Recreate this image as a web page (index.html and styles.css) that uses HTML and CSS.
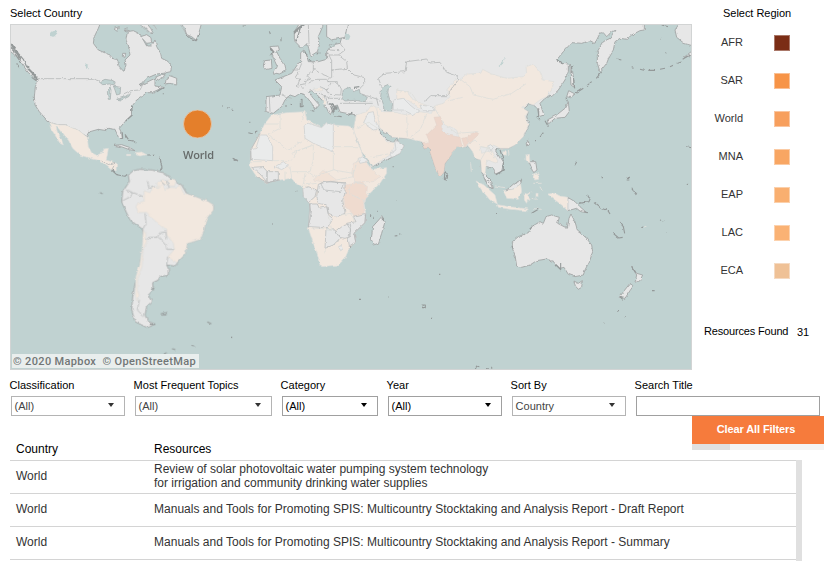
FILE: index.html
```html
<!DOCTYPE html>
<html lang="en">
<head>
<meta charset="utf-8">
<title>Resources</title>
<link rel="stylesheet" href="styles.css">
</head>
<body>
<main class="dashboard">
  <div class="top">
    <section class="map-panel">
      <h2 class="label">Select Country</h2>
      <div class="map">
        <svg class="world" viewBox="10 24 682 346" width="682" height="346">
          <defs>
            <filter id="rough" x="0" y="0" width="100%" height="100%" color-interpolation-filters="sRGB">
              <feTurbulence type="fractalNoise" baseFrequency=".22" numOctaves="2" seed="4"/>
              <feDisplacementMap in="SourceGraphic" scale="3" xChannelSelector="R" yChannelSelector="G"/>
            </filter>
          </defs>
          <rect class="sea" x="10" y="24" width="682" height="346"/>
          <g filter="url(#rough)">
          <!-- North America -->
          <g transform="scale(.33333)">
            <path class="land" d="M20 60H305L295 85 283 110 280 130 295 150 325 163 335 175 352 178 358 200 372 215 378 195 375 180 390 165 385 135 378 120 382 95 400 92 420 102 430 120 440 138 455 138 465 120 470 140 482 160 485 175 505 185 515 195 512 215 490 220 470 222 440 235 420 258 450 242 465 235 465 258 490 262 455 278 440 278 425 290 410 300 395 320 395 345 375 365 358 385 365 400 367 415 358 418 350 400 345 388 325 385 320 392 295 388 270 395 262 410 245 400 235 390 215 385 200 375 180 375 150 368 140 360 118 335 105 315 103 290 106 260 112 245 100 230 85 218 65 190 50 170 20 145Z"/>
            <path class="tan" d="M148 368L180 375 200 375 215 383 235 390 262 412 265 440 275 458 290 466 308 458 312 447 325 445 322 465 318 480 340 487 350 490 348 512 335 510 300 482 270 475 240 465 218 445 205 420 190 405 175 385 168 380 172 395 185 420 190 435 180 430 165 405 152 385Z"/>
            <path class="heavy" d="M32 128L45 145 55 160 70 178 80 200 100 220 112 235M34 140L48 165 62 186M50 190L60 205M95 232L108 242"/>
            <path class="heavy thick" d="M34 132L48 155 62 176M84 206L102 224 110 240"/>
            <path class="line" d="M112 236H280L300 243M370 282L392 272 420 270 430 250 445 245M308 483L322 495 345 487M335 511L342 497M460 72L470 88M420 74L445 98M540 72L552 90 560 105"/>
            <path class="water" d="M298 246L315 238 340 242 345 255 328 252 308 254ZM330 260L322 275 325 298 331 298 333 270ZM340 258L362 262 360 282 350 285 345 270ZM350 298L375 290 393 278 386 290 365 300Z"/>
            <path class="lake" d="M150 98L163 92 172 100 162 110 150 108ZM255 190L266 195 266 208 259 206Z"/>
            <path class="land" d="M498 238L512 228 530 235 530 255 510 250 496 252ZM540 68L553 82 560 104 575 110 590 122 597 98 605 68ZM418 68L440 70 452 85 461 102 448 96 434 82ZM342 436L365 434 388 442 405 452 388 449 366 441ZM368 160L377 160 375 172 367 169ZM340 86L358 80 352 94ZM372 88L381 84 380 94ZM422 110L440 104 452 112 455 128 440 130Z"/>
            <path class="tan" d="M408 458L425 456 440 464 420 468 409 465ZM380 463h12v4h-12z"/>
            <path class="heavy" d="M335 510L350 524 375 529 383 522M367 397L368 415 357 418M442 465h8M458 466h6M480 472l2 10 4 20-6 10M375 403l12 18 12 2 10 6M666 318h4M681 323l7 2M697 328l4 4M700 475l6 6 6-2M395 320l2 25-20 18M470 275l20-12M490 280v3M556 100l10 12 22 10 10-22"/>
            <path class="land" d="M465 232L480 226 495 222 490 232 475 240Z"/>
          </g>
          <!-- South America -->
          <g transform="translate(0 180) scale(.33333)">
            <path class="land" d="M385 -15L388 5 385 10 368 35 365 65 378 95 390 120 428 148 430 190 420 250 410 290 398 350 395 390 405 425 440 442 450 440 465 432 445 425 435 405 440 380 455 365 445 345 460 330 458 308 475 300 480 290 505 285 505 265 500 255 525 258 535 245 555 222 562 190 600 178 612 150 618 118 640 90 640 75 625 65 585 50 560 40 545 15 520 0 490 -22 455 -30 420 -32 400 -28Z"/>
            <path class="tan" d="M432 32L450 38 460 20 475 22 488 8 495 28 515 22 530 24 540 14 550 38 585 50 625 65 640 75 640 90 618 118 612 150 600 178 562 190 555 222 530 248 502 232 523 208 520 190 500 165 500 150 455 115 440 97 415 98 408 80 412 72 432 66Z"/>
            <path class="tan" d="M470 10l16-12 14 4 2 14-14-4-12 10ZM504 0l14-4 10 10-4 12-16 0Z"/>
            <path class="tan" d="M430 148L438 162 440 185 430 205 426 260 414 290 412 325 418 350 412 365 406 350 408 290 420 250 428 190Z"/>
            <path class="line" d="M368 62L392 50 400 38 430 50M400 38L378 30M428 148L438 130 435 100M440 178L448 172 472 172 480 158 498 156 500 178M475 172L498 192 500 208H522M503 230L500 255M442 2L448 25 465 20M480 2L495 15M500 2l8 22M418 360L412 390 432 410"/>
            <path class="heavy" d="M482 402l18-5M486 406l14-3M622 426l12 6M574 498l8 3M300 38l8 3M694 472h2M470 538l30-20M516 506l10 3M457 330l6-8M450 433h16"/>
            <path class="foam" d="M470 540l20-12 15 5 20 5"/>
          </g>
          <!-- Africa and Eurasia -->
          <g transform="translate(230 0) scale(.33333)">
            <path class="land" d="M350 60H1243V90L1230 92 1205 105 1190 118 1170 115 1155 125 1150 150 1140 165 1130 190 1110 215 1102 190 1102 155 1120 125 1140 115 1155 90 1145 95 1130 110 1120 98 1110 100 1095 130 1080 122 1055 130 1025 128 1000 155 980 180 995 190 1015 192 1015 215 1005 240 985 270 965 290 960 285 945 295 930 310 935 325 942 345 927 350 922 325 910 315 895 312 880 325 895 335 890 350 897 375 880 410 855 435 835 445 810 445 795 450 820 490 815 515 795 522 790 505 770 500 763 495 765 525 785 545 790 565 780 565 765 540 755 515 752 480 735 475 730 455 710 435 695 440 680 435 660 470 645 490 640 520 628 527 615 500 600 455 600 445 585 445 575 425 560 418 530 415 490 412 470 400 455 390 445 380 450 395 470 420 490 428 500 415 505 425 522 437 510 460 480 475 425 500 415 480 395 455 385 425 370 395 375 375 380 345 355 341 330 336 322 315 315 318 300 345 290 325 280 305 262 285 245 272 235 275 250 295 268 315 255 330 245 310 225 285 210 280 195 290 180 285 165 300 155 320 130 340 108 335 108 290 150 285 155 260 135 240 160 230 185 220 205 190 212 185 212 158 222 150 230 165 235 185 265 185 290 178 290 155 305 135 330 130Z"/>
            <path class="land" d="M215 60L193 95 193 122 215 145 232 130 242 168 262 155 270 130 265 110 278 80 280 60ZM290 60V110L305 120 345 112 355 60ZM120 140L145 138 148 150 140 155 150 175 165 195 168 212 148 222 130 218 142 200 135 185 128 165ZM104 182L124 180 126 205 104 210 100 195Z"/>
            <path class="water" d="M340 268L360 262 372 276 388 268 390 280 412 292 406 305 375 301 345 303 335 295ZM455 262L475 253 485 262 470 275 475 295 488 310 485 335 462 332 460 312 452 290Z"/>
            <path class="lake" d="M345 105l10-4 6 8-4 10-10 0ZM806 200L825 172 820 188 810 200Z"/>
            <path class="water" d="M297 145l14-8 10-8-22 6Z"/>
            <!-- Central, South and East Asia -->
            <path class="tan" d="M610 318L640 310 660 290 650 270 675 240 692 237 710 222 752 220 758 208 785 222 830 235 880 230 890 220 888 200 910 192 930 215 940 240 972 245 965 270 950 290 930 300 910 315 895 310 875 322 895 335 885 350 895 375 880 410 855 435 835 445 810 445 790 435 780 445 750 440 755 460 785 450 805 485 800 490 770 480 765 525 755 515 752 480 735 475 728 455 712 435 695 440 680 390 640 370Z"/>
            <path class="tan" d="M378 345L410 335 425 315 440 322 460 335 485 335 530 345 565 335 605 340 610 318 640 370 600 445 575 425 530 415 490 412 455 388 445 380 425 390 440 385 450 400 470 425 495 428 480 465 425 500 415 480 395 455 385 425 370 395Z"/>
            <path class="tan" d="M500 270L530 275 550 300 600 320 570 325 555 315 525 295 500 300Z"/>
            <path class="land pale" d="M415 338L430 335 435 360 450 388 430 390 400 370ZM490 300L520 295 540 315 565 335 550 345 520 330 490 330ZM495 425L505 425 522 437 510 460 485 472 480 462 498 450ZM770 440l12-6 8 8-6 8ZM570 315l35 5 10 12-38 0Z"/>
            <path class="rose" d="M612 352L632 350 638 375 635 395 655 405 690 412 695 440 680 440 660 470 645 490 640 520 628 527 615 500 600 455 600 445 585 445 578 428 598 425 590 405 605 390 620 375ZM716 405L738 395 748 403 730 418 720 432 712 415ZM695 415l15-3 5 18-12 8Z"/>
            <path class="soft" d="M690 237L720 260 730 285 790 298 845 280 890 250M500 270l45 10 20 30M530 345l2 65M590 345l-20 45-30 22M440 325l10 65M380 385l35-18 40 25M425 470l50-8M710 435l25-15 20 20 20 5M640 370l40 30 65-5M752 480l20-35 20 30M658 302l40-10"/>
            <path class="line" d="M215 190l-8 20-20 0M207 215l-10 15 12 10-8 20 20 5M250 182l0 30-18 15 10 10-20 8M250 205l20 15 30 12M305 182l0 50-12 6M305 182l-12-25M295 165l30 0 20-15-15-20M325 165l25 20 2 20-48 5M352 205l20 20 32 8 0 18-15 15M290 238l-35 0-20 12-30 5M290 240l12 10-10 20-22-10M292 245l30 0 12 22-2 18-35-2-12-18M270 280l30 15 30 0M285 285l10 30M155 285l30 10M118 290l2 45M235 72l2 60M395 282l45 15 5 20M435 290l15 15M445 235l20-15 60-5 5-30 60-8 10 12 30-2 20 30 30 10 7 10-22 28-13 22-50 0-15 15M445 235l10 25M330 310l98 0M300 150l28 2"/>
            <path class="heavy" d="M190 98l10-10M192 118l8 4 12-42 16-8M268 155l-8 8M212 300l4-2v22h-5v-12M238 330l15 4M315 348l20 2M355 345l12-5M165 318h6M182 313h4M118 94l3 8M153 112v12M120 144l8 10-6 12M300 310l22 18M305 325l18-5M225 155l8 20M236 180l8 3M372 262l16-2M302 318l8 22M5 328h3M58 367h3M55 398l14 4M78 400l3-8M8 475l16 8M38 75h14"/>
            <path class="heavy thick" d="M192 100l12-14 16-12M302 312l18 12-12 12M122 146l10 12"/>
            <path class="tan" d="M248 268l28-4 2 8-18 2Zm28 20 8 8 4 18-8-2Z"/>
            <!-- African mainland -->
            <path class="tan" d="M125 345L170 338 225 335 230 360 275 383 290 368 310 375 355 378 370 385 380 420 395 455 400 475 425 508 470 503 470 520 450 550 410 590 402 610 407 640 405 668 372 700 377 725 358 745 345 775 325 795 275 800 265 770 250 730 235 685 243 640 238 610 220 585 218 560 195 548 185 535 150 540 110 548 80 530 60 500 62 450 90 400 105 370Z"/>
            <path class="rose2" d="M345 552L400 545 412 560 410 590 400 610 402 640 375 648 345 620 342 595Z"/>
            <path class="rose3" d="M370 490L400 480 425 508 450 530 430 545 375 545 365 520ZM250 540l30-30 40 30-30 8Z"/>
            <path class="land pale" d="M222 372L235 370 275 383 290 368 310 375 310 455 250 430 225 415ZM90 405L110 405 128 440 128 482 65 478 62 450 78 445ZM135 500l25-15 15 12-20 12ZM385 475l15-5 12 15-22 5ZM326 740l8-4 6 10-8 6Z"/>
            <path class="land inner" d="M265 553L285 545 345 548 345 580 338 600 345 640 320 650 295 640 290 615 265 610 260 590ZM240 612L262 612 268 625 290 620 295 645 308 655 295 683 235 680ZM288 688L315 690 330 715 310 735 285 745ZM318 695L345 672 362 675 360 710 345 715 330 712ZM370 650L407 640 405 668 372 700 377 725 358 738 355 718 362 690 350 670 378 665ZM218 565L235 560 260 570 255 590 235 608 220 588ZM110 515L145 515 145 540 112 548ZM65 502L98 500 112 515 110 545 90 522ZM272 550l30-6 40 6-10 25-50-5Z"/>
            <path class="land" d="M455 650L465 665 455 700 445 730 430 735 424 718 428 680Z"/>
            <path class="soft" d="M105 372l45 0M150 345l0 40-35 18 60 48 50-35M222 340l-5 25M128 482l55 0 20-30 40-15M185 460l65-25 0 45-10 35-55 0M310 440h75M310 455l0 55-60 20-20-15M310 510l60 10 15-45M165 515v22M180 500l5 35M225 520l-5 35 40-5M320 540l50-10 0-20M372 545l38 10M365 550l-10 30 55 25M330 645l35-5 10 30M295 650l10 38-70-5M285 745l0 15M310 690l-22 0M60 485l35 0"/>
            <path class="line" d="M407 640l-2 28-33 32 5 25-19 20M238 610l5 30-8 42M62 450l28-50M62 452v28M80 530l32 18 38-8"/>
            <path class="heavy" d="M645 515l8 12-4 12-6-4ZM126 672h3M200 574h3M422 646v6M431 650l3 6M442 634h2M495 604h3M494 708l8-1M507 702h4M387 898h6M475 891h2M627 823h4M576 915h10v8h-9ZM603 955h4M3 1012h3M647 541h3M357 740h5M488 500h3M455 655l8 8"/>
          </g>
          <!-- East Asian islands, Oceania -->
          <g transform="translate(460 0) scale(.33333)">
            <path class="land" d="M700 60H665L645 90 650 112 672 130 700 138ZM326 272L345 282 332 293 320 290ZM325 305L328 335 315 352 285 355 265 372 262 360 290 345 315 325ZM330 190L338 215 343 262 333 255 331 220ZM198 425l7-4 2 12-7 5ZM207 485l20 0 4 25-10 8ZM700 150l-18 14-10 8 22-6Z"/>
            <path class="tan" d="M198 465l10-2 2 22-12-4ZM220 522l14-4 2 20-12 2ZM128 455h12l-2 10-8 0Z"/>
            <path class="heavy" d="M472 177l12 3M515 200l6 2M540 208l12 3M565 211l20 0M600 208l15-3M630 200l10-4M650 190l12-4M668 178l22-14M425 215l-16 20M395 245l-14 12M370 265l-22 14M318 292l4 12M255 362l10 18M250 398l-10 14M225 422h3M350 486l-6 10M678 440l14 3M682 552v3M425 533h4M498 535h12M514 565h4M600 115h4M617 155l2 5M605 75l20 5M290 178l18 14M230 350l10 10M236 325v25M335 195v25M340 230l4 35M120 450l10 30 0 30-22 14"/>
            <path class="foam" d="M32 490l2 25M145 450l2 15M105 558l30 5M220 550h25"/>
          </g>
          <g transform="translate(460 180) scale(.33333)">
            <path class="land" d="M157 185L175 170 205 158 215 140 240 125 250 130 258 110 275 105 298 112 293 130 322 145 327 115 333 102 345 125 352 150 372 165 395 195 398 215 390 240 375 270 370 285 345 290 325 283 312 262 300 265 280 245 260 237 230 242 210 255 185 262 170 258 165 225 157 205ZM342 303L355 310 367 302 365 322 355 328 346 318ZM515 258L530 280 548 285 540 302 525 308 530 285ZM510 310L520 318 510 332 495 355 478 352 488 338ZM323 52L345 65 360 80 380 98 362 95 350 85 323 92ZM75 -5L90 8 98 25 85 20ZM185 0L165 8 140 30 160 28 182 12Z"/>
            <path class="tan" d="M48 3L72 15 105 45 112 72 90 60 65 30ZM130 32L160 28 182 12 185 35 175 58 140 55ZM112 74L150 80 205 87 200 92 150 88 115 82ZM192 38L200 42 214 36 202 46 212 62 202 58 200 70 193 60ZM262 42L285 40 300 48 323 52V92L305 75 285 60ZM228 40h6v12h-6z"/>
            <path class="foam" d="M220 86l25 2M240 20l8 15M215 55l15 3M545 145l16-8"/>
            <path class="heavy" d="M215 100l20-12M355 70l32-5 4-10-12-8M402 68l20 16 22 8 6 10M478 126l12 14 4 20M460 160l16 14 12-2M515 25l14 20M600 120l10 3M618 155h3M108 100h3M576 332h8M472 392h5M493 410h2M429 430h4M544 146l6-6M362 92l22 6M288 255l14 14v-20M208 148l16-12M480 350l8 8M156 198l4 8M682 13h3M500 0h8M45 570l5-12 8 2M78 566l8 1M95 560v6M515 260l12 18"/>
          </g>
          </g>
          <circle class="marker" cx="197.5" cy="124" r="14"/>
        </svg>
        <span class="marker-name">World</span>
        <span class="credit">© 2020 Mapbox&nbsp; © OpenStreetMap</span>
      </div>
    </section>
    <aside class="regions">
      <h2 class="label">Select Region</h2>
      <ul class="region-list">
        <li><span>AFR</span><i class="swatch afr"></i></li>
        <li><span>SAR</span><i class="swatch sar"></i></li>
        <li><span>World</span><i class="swatch wld"></i></li>
        <li><span>MNA</span><i class="swatch mna"></i></li>
        <li><span>EAP</span><i class="swatch eap"></i></li>
        <li><span>LAC</span><i class="swatch lac"></i></li>
        <li><span>ECA</span><i class="swatch eca"></i></li>
      </ul>
      <p class="found"><span class="found-label">Resources Found</span><span class="count">31</span></p>
    </aside>
  </div>
  <div class="filters">
    <div class="filter"><span class="label">Classification</span><div class="select muted">(All)<i class="caret"></i></div></div>
    <div class="filter"><span class="label">Most Frequent Topics</span><div class="select muted">(All)<i class="caret"></i></div></div>
    <div class="filter"><span class="label">Category</span><div class="select">(All)<i class="caret"></i></div></div>
    <div class="filter"><span class="label">Year</span><div class="select">(All)<i class="caret"></i></div></div>
    <div class="filter"><span class="label">Sort By</span><div class="select muted">Country<i class="caret"></i></div></div>
    <div class="filter"><span class="label">Search Title</span><div class="select"></div></div>
  </div>
  <div class="table-top">
    <div class="row head"><span>Country</span><span>Resources</span></div>
    <div class="clear"><div class="button">Clear All Filters</div><div class="hscroll"><i></i></div></div>
  </div>
  <div class="table">
    <div class="rows">
      <div class="row"><span>World</span><span>Review of solar photovoltaic water pumping system technology<br>for irrigation and community drinking water supplies</span></div>
      <div class="row"><span>World</span><span class="wide">Manuals and Tools for Promoting SPIS: Multicountry Stocktaking and Analysis Report - Draft Report</span></div>
      <div class="row"><span>World</span><span class="wide">Manuals and Tools for Promoting SPIS: Multicountry Stocktaking and Analysis Report - Summary</span></div>
      <div class="row"></div>
    </div>
    <i class="vscroll"></i>
  </div>
</main>
</body>
</html>
```
FILE: styles.css
```css
* { box-sizing: border-box; }
body {
  margin: 0;
  background: #fff;
  color: #000;
  font: 11px/14px "Liberation Sans", Arial, sans-serif;
}
.dashboard { width: 840px; height: 561px; overflow: hidden; }
.top { display: flex; height: 370px; padding-left: 10px; }
.label { display: block; margin: 0; font-size: 11px; font-weight: 400; line-height: 14px; letter-spacing: 0; white-space: nowrap; }
.map-panel { width: 682px; padding-top: 6px; }
.map { position: relative; height: 346px; margin-top: 4px; }
.map::after { content: ""; position: absolute; inset: 0; border: 1px solid #d2d4d4; }
.world { display: block; stroke-linejoin: round; }
.world path { vector-effect: non-scaling-stroke; }
.sea { fill: #c0d2d1; }
.land { fill: #e7e7e7; stroke: #a3a6a6; stroke-width: .9; }
.pale { fill: #eaebeb; stroke: #cfd2d2; stroke-width: .8; }
.inner { stroke: #bcbfbf; stroke-width: .8; }
.tan { fill: #f2e8df; stroke: #dcdedb; stroke-width: .7; }
.rose { fill: #edd7cc; stroke: #e3d3cb; stroke-width: .6; }
.rose2 { fill: #efdbcf; stroke: #e2d9d3; stroke-width: .6; }
.rose3 { fill: #f1e2d7; stroke: #dfdcd8; stroke-width: .6; }
.water { fill: #c0d2d1; stroke: #a6adad; stroke-width: .7; }
.lake { fill: #c0d2d1; }
.line { fill: none; stroke: #b5b7b7; stroke-width: .8; }
.soft { fill: none; stroke: #dddedb; stroke-width: .8; }
.heavy { fill: none; stroke: #949999; stroke-width: 1.1; }
.thick { stroke-width: 2; }
.foam { fill: none; stroke: #dedfdb; stroke-width: 1; }
.marker { fill: #e47f2b; stroke: #e3c9b0; stroke-width: .8; }
.marker-name {
  position: absolute; left: 173px; top: 124px;
  color: #666b6a; font: 600 11px/14px "Open Sans", sans-serif; letter-spacing: -.2px;
}
.credit {
  position: absolute; left: 2px; top: 330px; width: 187px; height: 14px; padding-left: 1px;
  background: #e9eeed; color: #717676; font: 500 11px/15px Roboto, sans-serif;
  letter-spacing: .35px; white-space: nowrap;
}
.regions { width: 148px; padding-top: 6px; }
.regions .label { margin-left: 31px; letter-spacing: -.03px; }
.region-list { margin: 3px 0 0; padding: 0; list-style: none; }
.region-list li { display: flex; align-items: center; height: 38px; color: #333; }
.region-list span { width: 51px; text-align: right; }
.swatch { width: 16px; height: 16px; margin: 2px 0 0 31px; border: 1px solid; }
.afr { background: #7b2d15; border-color: #aa7869; }
.sar { background: #f79447; border-color: #fac094; }
.wld { background: #f79f5d; border-color: #fac59f; }
.mna { background: #f8a663; border-color: #fbcba4; }
.eap { background: #f9af70; border-color: #fbd0ab; }
.lac { background: #fab274; border-color: #fcd2ae; }
.eca { background: #efc196; border-color: #f5dac2; }
.found { display: flex; margin: 35px 0 0 12px; }
.found-label { width: 84px; letter-spacing: -.17px; white-space: nowrap; }
.count { margin: 1px 0 0 9px; }
.filters {
  display: grid; grid-template-columns: 114px 137px 96px 114px 114px 184px;
  column-gap: 10px; height: 46px; padding: 8px 0 0 11px;
}
.filter .label { margin-left: -1.4px; }
.select {
  display: flex; align-items: center; justify-content: space-between;
  height: 20px; margin-top: 4px; padding: 0 10px 0 2.6px; border: 1px solid #a0a0a0;
}
.muted { border-color: #b4b4b4; color: #444; }
.caret { border: solid transparent; border-width: 4px 3.5px 0; border-top-color: #000; margin-top: -2px; }
.muted .caret { border-top-color: #333; }
.table-top { display: flex; height: 44px; }
.row { display: flex; align-items: center; height: 33px; padding-bottom: 2px; border-bottom: 1px solid #d4d4d4; color: #333; font-size: 12px; line-height: 14px; }
.row span:first-child { width: 144px; padding-left: 6px; }
.row .wide { letter-spacing: .012px; }
.head { width: 682px; height: 44px; margin-left: 10px; padding: 22px 0 0; border: 0; color: #000; }
.clear { width: 132px; }
.button { height: 28px; background: #f67b3c; color: #fff; font-weight: 700; line-height: 27px; text-align: center; padding-right: 4px; letter-spacing: -.1px; }
.hscroll { height: 6px; background: #f4f4f4; }
.hscroll i { display: block; width: 38px; height: 6px; background: #e0e0e0; }
.table { display: flex; height: 101px; margin-left: 10px; overflow: hidden; }
.rows { width: 786px; border-top: 1px solid #d4d4d4; }
.vscroll { width: 6px; background: #e0e0e0; }
```
